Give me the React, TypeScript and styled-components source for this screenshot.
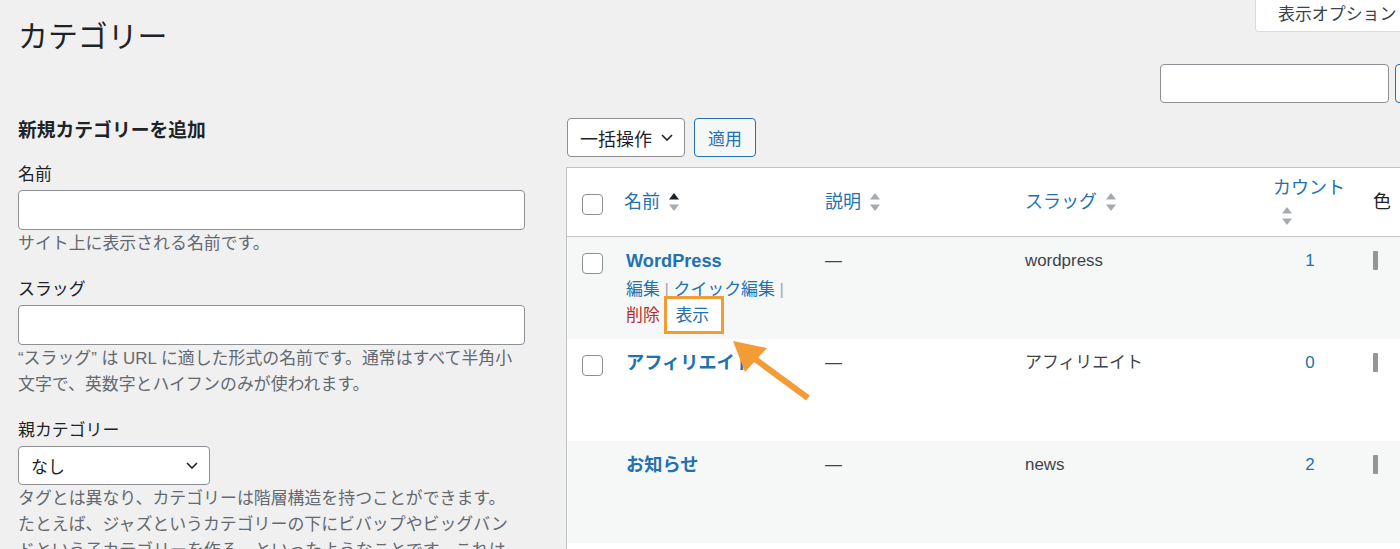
import React from "react";
import styled, { createGlobalStyle } from "styled-components";

const SANS = `"Liberation Sans", "Noto Sans CJK JP", sans-serif`;
const BLUE = "#2271b1";
const ORANGE = "#f39b34";

const GlobalStyle = createGlobalStyle`
  *, *::before, *::after { box-sizing: border-box; }
  html, body { margin: 0; padding: 0; }
  body {
    width: 1400px;
    height: 549px;
    overflow: hidden;
    background: #f0f0f1;
    color: #1d2327;
    font-family: ${SANS};
    font-size: 16.9px;
  }
`;

const Page = styled.div`
  position: relative;
  width: 1558px;
  padding-left: 18px;
`;

const TopBar = styled.div`
  display: flex;
  align-items: flex-start;
`;

const Title = styled.h1`
  margin: 17px 0 0;
  font-size: 29.9px;
  font-weight: 400;
  line-height: 39px;
  color: #1d2327;
`;

const ScreenMeta = styled.div`
  margin-left: auto;
  margin-right: 22px;
  margin-top: -6px;
  display: flex;
  gap: 8px;
`;

const MetaTab = styled.button`
  display: flex;
  align-items: center;
  gap: 6px;
  height: 38px;
  padding: 0 10px 0 22px;
  background: #fff;
  border: 1px solid #dcdcde;
  border-top: none;
  border-radius: 0 0 4px 4px;
  font-family: ${SANS};
  font-size: 16.9px;
  color: #3c434a;
`;

const SearchRow = styled.div`
  display: flex;
  justify-content: flex-end;
  gap: 6px;
  margin-top: 8px;
`;

const SearchInput = styled.input`
  width: 229px;
  height: 39px;
  padding: 0 10px;
  background: #fff;
  border: 1px solid #8c8f94;
  border-radius: 4px;
  font-family: ${SANS};
  font-size: 16.9px;
`;

const OutlineButton = styled.button`
  height: 39px;
  padding: 0 13px;
  background: #f6f7f7;
  border: 1px solid ${BLUE};
  border-radius: 4px;
  color: ${BLUE};
  font-family: ${SANS};
  font-size: 16.9px;
  white-space: nowrap;
`;

const ColWrap = styled.div`
  display: grid;
  grid-template-columns: 507px 1fr;
  column-gap: 41px;
  align-items: start;
  margin-top: 15px;
`;

const LeftCol = styled.div`
  display: flex;
  flex-direction: column;
`;

const FormTitle = styled.h2`
  margin: 0 0 19px;
  font-size: 18.8px;
  font-weight: 700;
  line-height: 26px;
  color: #1d2327;
`;

const Field = styled.div`
  margin-bottom: 21px;
`;

const Label = styled.label`
  display: block;
  margin-bottom: 3px;
  font-size: 16.9px;
  line-height: 24px;
  color: #1d2327;
`;

const TextInput = styled.input`
  display: block;
  width: 100%;
  height: 40px;
  padding: 0 10px;
  background: #fff;
  border: 1px solid #8c8f94;
  border-radius: 4px;
  font-family: ${SANS};
  font-size: 16.9px;
`;

const SelectBox = styled.div<{ $width: number; $size: number }>`
  display: flex;
  align-items: center;
  justify-content: space-between;
  width: ${(p) => p.$width}px;
  height: 39px;
  padding: 0 11px 0 12px;
  background: #fff;
  border: 1px solid #8c8f94;
  border-radius: 4px;
  font-size: ${(p) => p.$size}px;
  color: #1d2327;
`;

const ChevronSvg = styled.svg`
  display: block;
  flex: none;
`;

const Desc = styled.p`
  margin: 1px 0 0;
  font-size: 16.9px;
  line-height: 26px;
  color: #646970;
`;

const RightCol = styled.div`
  display: flex;
  flex-direction: column;
`;

const BulkRow = styled.div`
  display: flex;
  gap: 9px;
  padding-left: 1px;
`;

const TableWrap = styled.div`
  margin-top: 10px;
  min-height: 440px;
  background: #fff;
  border: 1px solid #c3c4c7;
  border-right: none;
`;

const Table = styled.table`
  width: 100%;
  table-layout: fixed;
  border-collapse: separate;
  border-spacing: 0;
`;

const HeadCell = styled.th<{ $cb?: boolean }>`
  height: 69px;
  padding: ${(p) => (p.$cb ? "0 0 0 15px" : "0 13px")};
  border-bottom: 1px solid #c3c4c7;
  vertical-align: middle;
  text-align: left;
  font-weight: 400;
  font-size: 18px;
  line-height: 28.5px;
  color: #1d2327;
`;

const SortLink = styled.a`
  color: ${BLUE};
  text-decoration: none;
`;

const SortSvg = styled.svg`
  display: inline-block;
  margin-left: 9px;
  vertical-align: -3px;
`;

const Row = styled.tr<{ $striped: boolean }>`
  background: ${(p) => (p.$striped ? "#f6f7f7" : "#fff")};
`;

const Cell = styled.td<{ $cb?: boolean; $name?: boolean; $center?: boolean }>`
  height: 102px;
  padding: ${(p) => (p.$cb ? "11px 0 0 15px" : p.$name ? "11px 13px 0 15px" : "11px 13px 0")};
  vertical-align: top;
  text-align: ${(p) => (p.$center ? "center" : "left")};
  font-size: 16.9px;
  line-height: 26px;
  color: #3c434a;
`;

const Checkbox = styled.input<{ $offset: number }>`
  appearance: none;
  display: block;
  width: 21px;
  height: 21px;
  margin: ${(p) => p.$offset}px 0 0;
  background: #fff;
  border: 1px solid #8c8f94;
  border-radius: 4px;
`;

const RowTitle = styled.a`
  display: block;
  font-size: 18.2px;
  font-weight: 700;
  line-height: 26px;
  color: ${BLUE};
  text-decoration: none;
`;

const RowActions = styled.div<{ $visible: boolean }>`
  margin-top: 2.5px;
  font-size: 16.9px;
  line-height: 26.7px;
  color: #a7aaad;
  visibility: ${(p) => (p.$visible ? "visible" : "hidden")};
`;

const ActionLink = styled.a<{ $danger?: boolean }>`
  color: ${(p) => (p.$danger ? "#b32d2e" : BLUE)};
  text-decoration: none;
`;

const Highlight = styled.span`
  padding: 7px 12px 6px 8px;
  background: #fff;
  border: 3px solid ${ORANGE};
`;

const CountLink = styled.a`
  color: ${BLUE};
  text-decoration: none;
`;

const Swatch = styled.span`
  display: block;
  width: 5px;
  height: 19px;
  margin-top: 3px;
  background: #959595;
  border-radius: 1px;
`;

const Annotation = styled.svg`
  position: absolute;
  left: 725px;
  top: 335px;
  overflow: visible;
  pointer-events: none;
`;

const Chevron = ({ color = "#1d2327" }: { color?: string }) => (
  <ChevronSvg width="12" height="7" viewBox="0 0 12 7">
    <path d="M1 1l5 5 5-5" fill="none" stroke={color} strokeWidth="1.6" />
  </ChevronSvg>
);

const SortIcon = ({ active = false }: { active?: boolean }) => (
  <SortSvg width="10" height="18" viewBox="0 0 10 18">
    <path d="M0 6.6L5 0l5 6.6z" fill={active ? "#1d2327" : "#a7aaad"} />
    <path d="M0 11.4h10L5 18z" fill="#a7aaad" />
  </SortSvg>
);

type Cat = {
  name: string;
  slug: string;
  count: number;
  checkbox: boolean;
  actions: boolean;
};

const cats: Cat[] = [
  { name: "WordPress", slug: "wordpress", count: 1, checkbox: true, actions: true },
  { name: "アフィリエイト", slug: "アフィリエイト", count: 0, checkbox: true, actions: false },
  { name: "お知らせ", slug: "news", count: 2, checkbox: false, actions: false },
];

export default function App() {
  return (
    <>
      <GlobalStyle />
      <Page>
        <TopBar>
          <Title>カテゴリー</Title>
          <ScreenMeta>
            <MetaTab>
              表示オプション
              <Chevron color="#50575e" />
            </MetaTab>
            <MetaTab>
              ヘルプ
              <Chevron color="#50575e" />
            </MetaTab>
          </ScreenMeta>
        </TopBar>

        <SearchRow>
          <SearchInput type="search" />
          <OutlineButton>カテゴリーを検索</OutlineButton>
        </SearchRow>

        <ColWrap>
          <LeftCol>
            <FormTitle>新規カテゴリーを追加</FormTitle>
            <Field>
              <Label>名前</Label>
              <TextInput type="text" />
              <Desc>サイト上に表示される名前です。</Desc>
            </Field>
            <Field>
              <Label>スラッグ</Label>
              <TextInput type="text" />
              <Desc>
                “スラッグ” は URL に適した形式の名前です。通常はすべて半角小
                <br />
                文字で、英数字とハイフンのみが使われます。
              </Desc>
            </Field>
            <Field>
              <Label>親カテゴリー</Label>
              <SelectBox $width={192} $size={16.9}>
                なし
                <Chevron />
              </SelectBox>
              <Desc>
                タグとは異なり、カテゴリーは階層構造を持つことができます。
                <br />
                たとえば、ジャズというカテゴリーの下にビバップやビッグバン
                <br />
                ドという子カテゴリーを作る、といったようなことです。これは
                <br />
                オプションです。
              </Desc>
            </Field>
          </LeftCol>

          <RightCol>
            <BulkRow>
              <SelectBox $width={118} $size={18}>
                一括操作
                <Chevron />
              </SelectBox>
              <OutlineButton>適用</OutlineButton>
            </BulkRow>

            <TableWrap>
              <Table>
                <colgroup>
                  <col style={{ width: 44 }} />
                  <col style={{ width: 201 }} />
                  <col style={{ width: 200 }} />
                  <col style={{ width: 248 }} />
                  <col style={{ width: 100 }} />
                  <col />
                </colgroup>
                <thead>
                  <tr>
                    <HeadCell $cb>
                      <Checkbox type="checkbox" $offset={5} />
                    </HeadCell>
                    <HeadCell>
                      <SortLink>
                        名前
                        <SortIcon active />
                      </SortLink>
                    </HeadCell>
                    <HeadCell>
                      <SortLink>
                        説明
                        <SortIcon />
                      </SortLink>
                    </HeadCell>
                    <HeadCell>
                      <SortLink>
                        スラッグ
                        <SortIcon />
                      </SortLink>
                    </HeadCell>
                    <HeadCell>
                      <SortLink>
                        カウント
                        <SortIcon />
                      </SortLink>
                    </HeadCell>
                    <HeadCell>色</HeadCell>
                  </tr>
                </thead>
                <tbody>
                  {cats.map((c, i) => (
                    <Row key={c.slug} $striped={i % 2 === 0}>
                      <Cell $cb>{c.checkbox && <Checkbox type="checkbox" $offset={5} />}</Cell>
                      <Cell $name>
                        <RowTitle>{c.name}</RowTitle>
                        <RowActions $visible={c.actions}>
                          <ActionLink>編集</ActionLink>
                          {" | "}
                          <ActionLink>クイック編集</ActionLink>
                          {" |"}
                          <br />
                          <ActionLink $danger>削除</ActionLink>{" "}
                          {c.actions ? (
                            <Highlight>
                              <ActionLink>表示</ActionLink>
                            </Highlight>
                          ) : (
                            <ActionLink>表示</ActionLink>
                          )}
                        </RowActions>
                      </Cell>
                      <Cell>—</Cell>
                      <Cell>{c.slug}</Cell>
                      <Cell $center>
                        <CountLink>{c.count}</CountLink>
                      </Cell>
                      <Cell>
                        <Swatch />
                      </Cell>
                    </Row>
                  ))}
                </tbody>
              </Table>
            </TableWrap>
          </RightCol>
        </ColWrap>

        <Annotation width="90" height="70" viewBox="0 0 90 70">
          <line x1="30" y1="24" x2="83" y2="63" stroke={ORANGE} strokeWidth="6" />
          <polygon points="8,6 20,37 42,13" fill={ORANGE} />
        </Annotation>
      </Page>
    </>
  );
}
